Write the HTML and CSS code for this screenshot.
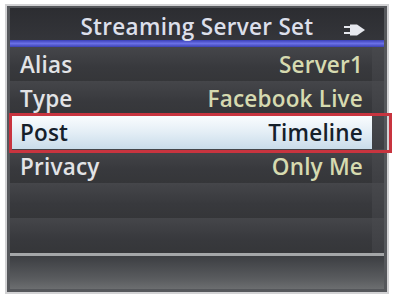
FILE: index.html
```html
<!DOCTYPE html>
<html>
<head>
<meta charset="utf-8">
<link rel="stylesheet" href="styles.css">
</head>
<body>
<div class="frame">
  <div class="panel">
    <div class="title">
      <span class="title-text">Streaming Server Set</span>
      <svg class="plug" width="22" height="12" viewBox="0 0 22 12">
        <rect x="0" y="2" width="6" height="2" fill="#e6e8ee"/>
        <rect x="0" y="8" width="6" height="2" fill="#e6e8ee"/>
        <path d="M6 0.5 H13 L21 6 L13 11.5 H6 Z" fill="#e6e8ee"/>
      </svg>
    </div>
    <div class="blue"></div>
    <div class="rows">
      <div class="row"><div class="cell"><span class="label">Alias</span><span class="value">Server1</span></div><div class="gutter"></div></div>
      <div class="row"><div class="cell"><span class="label">Type</span><span class="value">Facebook Live</span></div><div class="gutter"></div></div>
      <div class="row sel"><div class="cell"><span class="label">Post</span><span class="value">Timeline</span></div><div class="gutter"></div></div>
      <div class="row"><div class="cell"><span class="label">Privacy</span><span class="value">Only Me</span></div><div class="gutter"></div></div>
      <div class="row empty"><div class="cell"></div><div class="gutter"></div></div>
      <div class="row empty"><div class="cell"></div><div class="gutter"></div></div>
    </div>
    <div class="sep"></div>
    <div class="status"></div>
  </div>
  <div class="redbox"></div>
</div>
</body>
</html>
```
FILE: styles.css
```css
html, body {
  margin: 0;
  padding: 0;
  background: #ffffff;
}
body {
  width: 395px;
  height: 295px;
  overflow: hidden;
  font-family: "Open Sans", "DejaVu Sans", sans-serif;
}
.frame {
  position: relative;
  margin: 4px 0 0 5px;
  width: 384px;
  height: 290px;
  box-sizing: border-box;
  border: 2px solid #d2d2d4;
  background: #55575b;
  padding: 2px 3px 3px 3px;
}
.panel {
  display: flex;
  flex-direction: column;
  height: 100%;
  background: #3a3b3f;
}
.title {
  height: 32px;
  background: linear-gradient(#2c2d31, #34353a);
  display: flex;
  align-items: center;
  justify-content: center;
  position: relative;
}
.title-text {
  color: #dcdfea;
  font-size: 22.5px;
  font-weight: 600;
  letter-spacing: 0.3px;
  line-height: 32px;
  padding-top: 5px;
}
.plug {
  position: absolute;
  right: 18px;
  top: 16px;
}
.blue {
  height: 7px;
  background: linear-gradient(#3a3fb8, #6a70e6 50%, #3c42b4);
}
.rows {
  display: flex;
  flex-direction: column;
}
.row {
  height: 34px;
  display: flex;
}
.row.empty {
  height: 35px;
}
.cell {
  flex: 1;
  display: flex;
  justify-content: space-between;
  align-items: center;
  padding: 0 9px 0 10px;
  background: linear-gradient(#45464a, #38393d 60%, #353639);
  font-size: 22.5px;
  font-weight: 600;
  letter-spacing: 0.2px;
}
.gutter {
  width: 12px;
  background: linear-gradient(#47484c, #3e3f43);
}
.label {
  color: #e2e3e6;
}
.value {
  color: #d6dab0;
}
.row.sel .cell {
  background: linear-gradient(#fbfdfe, #e4eef6 50%, #c9dcea);
}
.row.sel .label,
.row.sel .value {
  color: #15202a;
}
.sep {
  height: 3px;
  background: #a4a6a8;
}
.status {
  flex: 1;
  background: linear-gradient(#3c3e42, #5a5c5f 70%, #6c6e70);
}
.redbox {
  position: absolute;
  left: 2px;
  top: 107px;
  width: 383px;
  height: 40px;
  box-sizing: border-box;
  border: 3px solid #c8343f;
}
```
